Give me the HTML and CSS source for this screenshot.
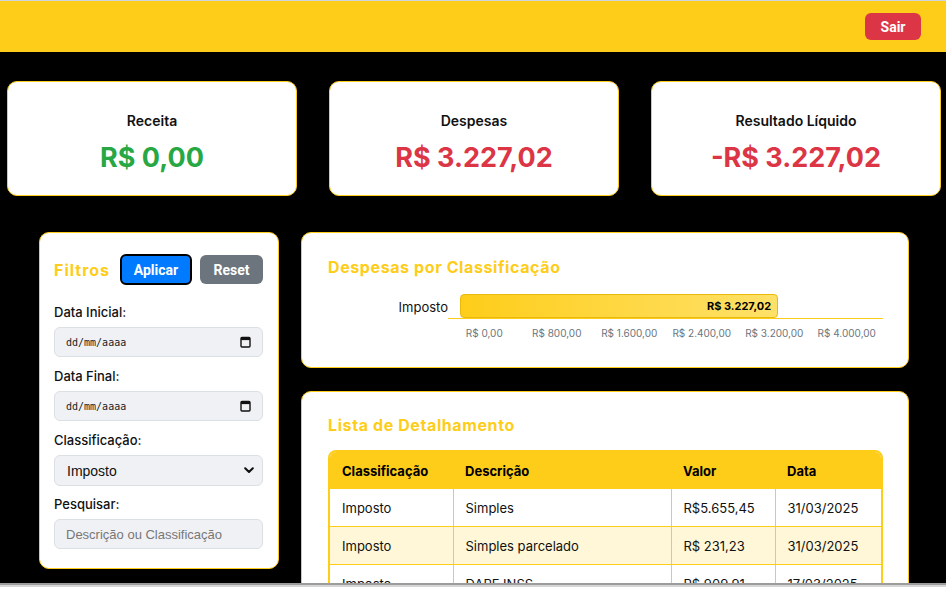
FILE: index.html
```html
<!DOCTYPE html>
<html lang="pt-BR">
<head>
<meta charset="utf-8">
<title>Painel Financeiro</title>
<link rel="stylesheet" href="styles.css">
</head>
<body>
<header class="topbar">
  <button class="btn btn-sair" type="button">Sair</button>
</header>
<main class="page">
  <section class="summary">
    <div class="card">
      <h2 class="card-title">Receita</h2>
      <p class="card-value positive">R$ 0,00</p>
    </div>
    <div class="card">
      <h2 class="card-title">Despesas</h2>
      <p class="card-value negative">R$ 3.227,02</p>
    </div>
    <div class="card">
      <h2 class="card-title">Resultado Líquido</h2>
      <p class="card-value negative">-R$ 3.227,02</p>
    </div>
  </section>

  <section class="content">
    <aside class="filters">
      <div class="filters-head">
        <h3 class="filters-title">Filtros</h3>
        <div class="filters-actions">
          <button class="btn btn-apply" type="button">Aplicar</button>
          <button class="btn btn-reset" type="button">Reset</button>
        </div>
      </div>

      <label class="field-label">Data Inicial:</label>
      <div class="field date-field">
        <span class="date-text">dd/mm/aaaa</span>
        <svg class="cal-icon" width="11" height="12" viewBox="0 0 11 12"><rect x="1" y="1.5" width="9" height="9.5" rx="1" fill="none" stroke="#111" stroke-width="1.4"/><rect x="1" y="1.5" width="9" height="2.6" fill="#111"/></svg>
      </div>

      <label class="field-label">Data Final:</label>
      <div class="field date-field">
        <span class="date-text">dd/mm/aaaa</span>
        <svg class="cal-icon" width="11" height="12" viewBox="0 0 11 12"><rect x="1" y="1.5" width="9" height="9.5" rx="1" fill="none" stroke="#111" stroke-width="1.4"/><rect x="1" y="1.5" width="9" height="2.6" fill="#111"/></svg>
      </div>

      <label class="field-label">Classificação:</label>
      <div class="select-wrap">
        <select class="field select-field">
          <option>Imposto</option>
        </select>
        <svg class="chevron" width="10" height="7" viewBox="0 0 10 7"><path d="M1.2 1.3 L5 5 L8.8 1.3" fill="none" stroke="#111" stroke-width="2.1" stroke-linecap="round" stroke-linejoin="round"/></svg>
      </div>

      <label class="field-label">Pesquisar:</label>
      <input class="field text-field" type="text" placeholder="Descrição ou Classificação">
    </aside>

    <div class="main-col">
      <section class="panel chart-panel">
        <h3 class="panel-title">Despesas por Classificação</h3>
        <div class="chart-row">
          <span class="chart-label">Imposto</span>
          <div class="chart-track">
            <div class="chart-bar" style="width: 75.2%">R$ 3.227,02</div>
          </div>
        </div>
        <div class="chart-ticks">
          <span>R$ 0,00</span>
          <span>R$ 800,00</span>
          <span>R$ 1.600,00</span>
          <span>R$ 2.400,00</span>
          <span>R$ 3.200,00</span>
          <span>R$ 4.000,00</span>
        </div>
      </section>

      <section class="panel table-panel">
        <h3 class="panel-title table-title">Lista de Detalhamento</h3>
        <div class="table-wrap">
          <table class="data-table">
            <colgroup>
              <col class="c1"><col class="c2"><col class="c3"><col class="c4">
            </colgroup>
            <thead>
              <tr><th>Classificação</th><th>Descrição</th><th>Valor</th><th>Data</th></tr>
            </thead>
            <tbody>
              <tr><td>Imposto</td><td>Simples</td><td>R$5.655,45</td><td>31/03/2025</td></tr>
              <tr class="alt"><td>Imposto</td><td>Simples parcelado</td><td>R$ 231,23</td><td>31/03/2025</td></tr>
              <tr><td>Imposto</td><td>DARF INSS</td><td>R$ 909,91</td><td>17/03/2025</td></tr>
              <tr class="alt"><td>Imposto</td><td>DAS</td><td>R$ 120,00</td><td>10/03/2025</td></tr>
            </tbody>
          </table>
        </div>
      </section>
    </div>
  </section>
</main>
<div class="window-edge"></div>
</body>
</html>
```

FILE: styles.css
```css
html {
  overflow: hidden;
}

body {
  margin: 0;
  background: #000;
  font-family: Inter, "Noto Sans", sans-serif;
  color: #111;
  border-top: 1px solid #cdd4dd;
}

.topbar {
  height: 51px;
  background: #fecd1a;
  display: flex;
  justify-content: flex-end;
  align-items: center;
  padding-right: 25px;
}

.btn {
  font-family: Roboto, "Liberation Sans", Arial, sans-serif;
  font-weight: 700;
  font-size: 14px;
  color: #fff;
  cursor: pointer;
  border-radius: 6px;
  padding: 0;
}

.btn-sair {
  width: 56px;
  height: 27px;
  background: #dc3545;
  border: none;
}

.summary {
  display: flex;
  gap: 32px;
  padding: 29px 5px 0 7px;
}

.card {
  width: 290px;
  height: 115px;
  box-sizing: border-box;
  background: #fff;
  border: 1px solid #fecd1a;
  border-radius: 10px;
  display: flex;
  flex-direction: column;
  align-items: center;
  justify-content: flex-start;
  gap: 7px;
  padding-top: 29px;
}

.card-title {
  margin: 0;
  font-size: 14px;
  font-weight: 600;
  line-height: 20px;
}

.card-value {
  margin: 0;
  font-size: 27px;
  font-weight: 700;
  line-height: 40px;
}

.positive { color: #28a745; }
.negative { color: #dc3545; }

.content {
  display: flex;
  align-items: flex-start;
  gap: 22px;
  padding: 36px 37px 0 39px;
}

.filters {
  width: 240px;
  flex: none;
  box-sizing: border-box;
  background: #fff;
  border: 1px solid #fecd1a;
  border-radius: 10px;
  padding: 21px 15px 19px 14px;
}

.filters-head {
  display: flex;
  justify-content: space-between;
  align-items: center;
  margin-bottom: 17px;
}

.filters-title {
  margin: 0;
  font-size: 16px;
  font-weight: 700;
  letter-spacing: 1px;
  color: #fecd1a;
}

.filters-actions {
  display: flex;
  align-items: center;
  gap: 8px;
}

.btn-apply {
  width: 72px;
  height: 31px;
  background: #007bff;
  border: 2px solid #000;
}

.btn-reset {
  width: 63px;
  height: 29px;
  background: #6c757d;
  border: none;
}

.field-label {
  display: block;
  font-size: 13px;
  font-weight: 500;
  line-height: 20px;
  margin-bottom: 5px;
}

.field {
  display: block;
  width: 100%;
  height: 30px;
  box-sizing: border-box;
  background: #f0f1f5;
  border: 1px solid #dcdfe4;
  border-radius: 6px;
  margin: 0 0 9px;
}

.date-field {
  display: flex;
  align-items: center;
  justify-content: space-between;
  padding: 0 11px 0 11px;
}

.date-text {
  font-family: "DejaVu Sans Mono", "Liberation Mono", monospace;
  font-size: 10px;
  color: #222;
}

.select-wrap {
  position: relative;
}

.select-field {
  appearance: none;
  -webkit-appearance: none;
  height: 31px;
  margin-bottom: 8px;
  padding: 0 12px;
  font-family: "Liberation Sans", Arial, sans-serif;
  font-size: 14px;
  color: #111;
}

.chevron {
  position: absolute;
  right: 9px;
  top: 12px;
  pointer-events: none;
}

.text-field {
  height: 30px;
  margin-bottom: 0;
  padding: 0 11px;
  font-family: "Liberation Sans", Arial, sans-serif;
  font-size: 13px;
  color: #111;
}

.text-field::placeholder {
  color: #777;
}

.main-col {
  flex: 1;
  display: flex;
  flex-direction: column;
  gap: 23px;
}

.panel {
  background: #fff;
  border: 1px solid #fecd1a;
  border-radius: 10px;
  padding: 22px 25px 27px 26px;
}

.panel-title {
  margin: 0 0 15px;
  font-size: 16px;
  font-weight: 700;
  letter-spacing: 0.6px;
  line-height: 24px;
  color: #fecd1a;
}

.chart-row {
  display: flex;
  align-items: center;
}

.chart-label {
  width: 120px;
  flex: none;
  text-align: right;
  font-size: 13px;
}

.chart-track {
  flex: 1;
  height: 24px;
  padding-left: 12px;
  border-bottom: 1px solid #fecd1a;
}

.chart-bar {
  height: 24px;
  box-sizing: border-box;
  background: linear-gradient(90deg, #fecd1a, #ffe169);
  border: 1px solid #e9b90c;
  border-radius: 4px;
  padding-right: 6px;
  text-align: right;
  font-size: 11px;
  font-weight: 700;
  line-height: 22px;
  color: #000;
}

.chart-ticks {
  display: flex;
  margin: 7px 0 0 120px;
  font-size: 10px;
  line-height: 14px;
  color: #6c757d;
}

.chart-ticks span {
  flex: 1;
  text-align: center;
}

.table-panel {
  padding-top: 21px;
}

.table-title {
  margin-bottom: 13px;
}

.table-wrap {
  border: 2px solid #fecd1a;
  border-radius: 8px 8px 0 0;
  overflow: hidden;
}

.data-table {
  width: 100%;
  table-layout: fixed;
  border-collapse: collapse;
  font-size: 13px;
}

.c1 { width: 123px; }
.c2 { width: 218px; }
.c3 { width: 104px; }
.c4 { width: auto; }

.data-table th {
  background: #fecd1a;
  text-align: left;
  font-weight: 700;
  height: 37px;
  padding: 0 12px;
  color: #000;
}

.data-table td {
  height: 37px;
  padding: 0 12px;
  border-right: 1px solid #fecd1a;
  border-bottom: 1px solid #fecd1a;
  color: #111;
}

.data-table td:last-child {
  border-right: none;
}

.data-table tr.alt td {
  background: #fff7d8;
}

.window-edge {
  position: fixed;
  left: 0;
  right: 0;
  bottom: 0;
  height: 7px;
  background: linear-gradient(#9c9c9c 0 2px, #d6d6d6 2px 4px, #fff 4px);
}
```
